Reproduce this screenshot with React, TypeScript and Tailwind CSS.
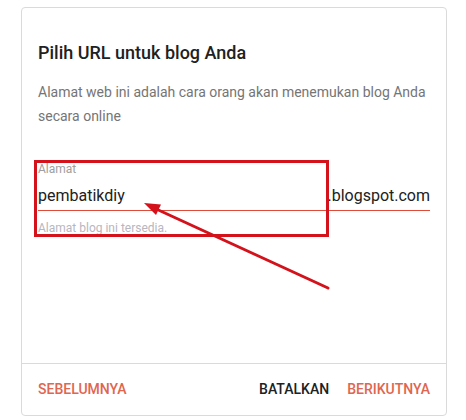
export default function App() {
  return (
    <div
      className="relative h-[420px] w-[466px] overflow-hidden bg-white"
      style={{ fontFamily: "Roboto, 'Liberation Sans', sans-serif" }}
    >
      <div className="ml-[21px] mt-[7px] flex h-[409px] w-[426px] flex-col rounded-[4px] border border-[#dadada] bg-white">
        <div className="flex-1 px-4 pt-[33px]">
          <h2 className="text-[18px] leading-[24px] font-medium text-[#212121]">
            Pilih URL untuk blog Anda
          </h2>
          <p className="mt-[15px] pr-1 text-[14px] leading-[24px] text-[#757575]">
            Alamat web ini adalah cara orang akan menemukan blog Anda secara
            online
          </p>

          <div className="mt-[34px]">
            <div className="text-[12px] leading-[14px] text-[#a0a0a0]">Alamat</div>
            <div className="mt-[10px] flex items-end pb-[4px] text-[16px] leading-[20px] text-[#212121]">
              <span className="flex-1">pembatikdiy</span>
              <span>.blogspot.com</span>
            </div>
            <div className="h-px bg-[#dd4b39]" />
            <div className="mt-[10px] text-[12px] leading-[14px] text-[#b8b6c0]">
              Alamat blog ini tersedia.
            </div>
          </div>
        </div>

        <div className="flex h-[52px] items-center border-t border-[#dadada] px-4 text-[14px]">
          <button className="font-medium text-[#e0664f]">SEBELUMNYA</button>
          <div className="ml-auto flex items-center gap-[18px]">
            <button className="font-medium text-[#212121]">BATALKAN</button>
            <button className="font-medium text-[#e0664f]">BERIKUTNYA</button>
          </div>
        </div>
      </div>

      {/* annotation: red box */}
      <div className="absolute left-[34px] top-[160px] h-[77px] w-[295px] border-[3px] border-[#d3121b]" />

      {/* annotation: arrow */}
      <svg
        className="pointer-events-none absolute left-0 top-0"
        width="466"
        height="420"
        viewBox="0 0 466 420"
      >
        <line
          x1="328"
          y1="288"
          x2="154"
          y2="208"
          stroke="#d3121b"
          strokeWidth="3"
          strokeLinecap="round"
        />
        <polygon points="144,203 161,204.5 156,215" fill="#d3121b" />
      </svg>
    </div>
  );
}
